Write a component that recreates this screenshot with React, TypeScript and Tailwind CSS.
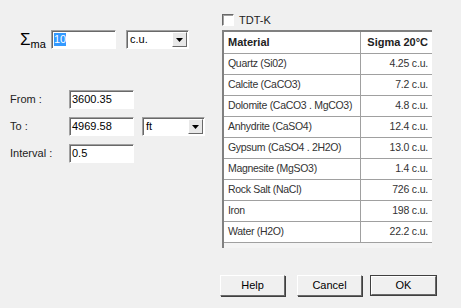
import React from 'react';

const rows = [
    { name: 'Quartz (Si02)', value: '4.25 c.u.' },
    { name: 'Calcite (CaCO3)', value: '7.2 c.u.' },
    { name: 'Dolomite (CaCO3 . MgCO3)', value: '4.8 c.u.' },
    { name: 'Anhydrite (CaSO4)', value: '12.4 c.u.' },
    { name: 'Gypsum (CaSO4 . 2H2O)', value: '13.0 c.u.' },
    { name: 'Magnesite (MgSO3)', value: '1.4 c.u.' },
    { name: 'Rock Salt (NaCl)', value: '726 c.u.' },
    { name: 'Iron', value: '198 c.u.' },
    { name: 'Water (H2O)', value: '22.2 c.u.' },
];

// sunken edit box, classic windows look
const TextBox = ({ value, selected = false }: { value: string; selected?: boolean }) => (
    <div className="w-[65px] h-[19px] bg-white border-t border-l border-[#a0a0a0] border-b border-r border-b-white border-r-white shadow-[inset_1px_1px_0_#696969] flex items-center pl-[2px]">
        {selected ? (
            <span className="bg-[#3399ff] text-white leading-[13px]">{value}</span>
        ) : (
            <span className="text-black leading-[13px]">{value}</span>
        )}
    </div>
);

const Combo = ({ value }: { value: string }) => (
    <div className="w-[63px] h-[19px] bg-white border-t border-l border-[#a0a0a0] border-b border-r border-b-white border-r-white shadow-[inset_1px_1px_0_#696969] flex items-center justify-between">
        <span className="pl-[3px] text-black leading-[13px]">{value}</span>
        <div className="w-[15px] h-[15px] mr-[1px] bg-[#e8e8e8] border border-t-white border-l-white border-b-[#696969] border-r-[#696969] flex items-center justify-center">
            <svg width="7" height="4" viewBox="0 0 7 4">
                <polygon points="0,0 7,0 3.5,4" fill="#000" />
            </svg>
        </div>
    </div>
);

const Button = ({ label, isDefault = false }: { label: string; isDefault?: boolean }) => (
    <div
        className={
            isDefault
                ? 'w-[67px] h-[21px] border border-[#404040] bg-[#f0f0f0] flex'
                : 'w-[65px] h-[21px] bg-[#f0f0f0] flex'
        }
    >
        <div className="flex-1 flex items-center justify-center border border-t-white border-l-white border-b-[#696969] border-r-[#696969] shadow-[1px_1px_0_#404040] text-black">
            {label}
        </div>
    </div>
);

const App = () => {
    return (
        <div
            className="w-[461px] h-[308px] bg-[#f0f0f0] text-[11px] text-[#222] flex flex-col overflow-hidden"
            style={{ fontFamily: '"Liberation Sans", Arial, sans-serif' }}
        >
            <div className="flex">
                {/* left side: inputs */}
                <div className="w-[222px] pt-[30px] flex flex-col">
                    <div className="flex items-center">
                        <div className="w-[51px] pl-[20px] flex items-end text-black">
                            <span className="text-[17px] leading-[17px]">Σ</span>
                            <span className="text-[11px] leading-[11px] -mb-[2px]">ma</span>
                        </div>
                        <TextBox value="10" selected />
                        <div className="ml-[10px]">
                            <Combo value="c.u." />
                        </div>
                    </div>

                    <div className="mt-[41px] flex flex-col gap-[8px]">
                        <div className="flex items-center">
                            <div className="w-[69px] pl-[10px]">From :</div>
                            <TextBox value="3600.35" />
                        </div>
                        <div className="flex items-center">
                            <div className="w-[69px] pl-[10px]">To :</div>
                            <TextBox value="4969.58" />
                            <div className="ml-[8px]">
                                <Combo value="ft" />
                            </div>
                        </div>
                        <div className="flex items-center">
                            <div className="w-[69px] pl-[10px]">Interval :</div>
                            <TextBox value="0.5" />
                        </div>
                    </div>
                </div>

                {/* right side: table */}
                <div className="pt-[14px] flex flex-col">
                    <div className="flex items-center h-[12px]">
                        <div className="w-[12px] h-[12px] bg-white border border-t-[#696969] border-l-[#696969] border-b-white border-r-white shadow-[inset_1px_1px_0_#a0a0a0]" />
                        <span className="ml-[5px] text-[#222]">TDT-K</span>
                    </div>
                    <div className="mt-[4px] w-[210px] h-[218px] overflow-hidden border-t-2 border-l-2 border-t-[#808080] border-l-[#808080] bg-white flex flex-col">
                        <div className="flex h-[22px] border-b border-[#a0a0a0] shrink-0">
                            <div className="w-[137px] pl-[4px] flex items-center font-bold text-[#222] border-r border-[#a0a0a0]">Material</div>
                            <div className="w-[71px] pr-[4px] flex items-center justify-end font-bold text-[#222] whitespace-nowrap">Sigma 20°C</div>
                        </div>
                        {rows.map((r) => (
                            <div key={r.name} className="flex h-[21px] border-b border-[#a0a0a0] shrink-0 text-[#333] text-[10.5px]">
                                <div className="w-[137px] pl-[4px] flex items-center border-r border-[#a0a0a0] whitespace-nowrap overflow-hidden tracking-[-0.3px]">{r.name}</div>
                                <div className="w-[71px] pr-[4px] flex items-center justify-end whitespace-nowrap tracking-[-0.2px]">{r.value}</div>
                            </div>
                        ))}
                        <div className="flex-1 bg-[#f4f4f4]" />
                    </div>
                </div>
            </div>

            <div className="mt-[27px] flex justify-end gap-[12px] pr-[24px]">
                <Button label="Help" />
                <div className="flex gap-[8px]">
                    <Button label="Cancel" />
                    <Button label="OK" isDefault />
                </div>
            </div>
        </div>
    );
};

export default App;
